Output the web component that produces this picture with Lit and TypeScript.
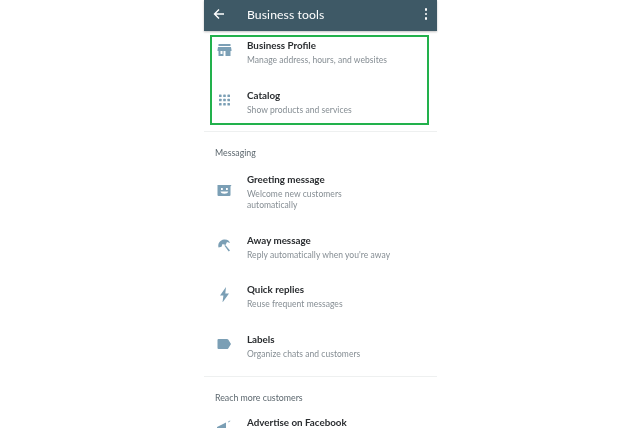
import { LitElement, css, html, svg } from "lit";
import { customElement } from "lit/decorators.js";

const icons = {
  store: svg`<path d="M1.500 1h12v2h-12zM1 4h13l.5 3v1h-1v5H8.500V8h-2v5h-5V8h-1V7zM3.500 8v3h2V8z" fill-rule="evenodd"/>`,
  grid: svg`<g transform="translate(2 1.500)"><rect width="2.600" height="2.600" rx=".6"/><rect x="4.200" width="2.600" height="2.600" rx=".6"/><rect x="8.400" width="2.600" height="2.600" rx=".6"/><rect y="4.200" width="2.600" height="2.600" rx=".6"/><rect x="4.200" y="4.200" width="2.600" height="2.600" rx=".6"/><rect x="8.400" y="4.200" width="2.600" height="2.600" rx=".6"/><rect y="8.400" width="2.600" height="2.600" rx=".6"/><rect x="4.200" y="8.400" width="2.600" height="2.600" rx=".6"/><rect x="8.400" y="8.400" width="2.600" height="2.600" rx=".6"/></g>`,
  greeting: svg`<path fill-rule="evenodd" d="M.5 2H14.500l-1 1.500V12a1 1 0 0 1-1 1H1.500a1 1 0 0 1-1-1zM4 5v2h1.800V5zm5 0v2h1.800V5zM3.500 8.500c.4 1.300 1.900 2.300 3.900 2.300s3.500-1 3.900-2.300z"/>`,
  umbrella: svg`<path d="M1.500 9.500C.5 5.500 3 2 7 1.500c3.500-.3 5.500 1.300 6 3.500L10 4 8.500 7 5.500 6 4.500 8.800zM7.300 7.500l1.300-.3 4.400 5.300-1.300 1z"/>`,
  bolt: svg`<path d="M9 0 3 8.500h3.400L5.500 15.500 12 6.500H8.300z"/>`,
  label: svg`<path d="M1.500 2h8.500a1.500 1.500 0 0 1 1.200.6L14 7l-2.800 4.400a1.500 1.500 0 0 1-1.200.6H1.500A1 1 0 0 1 .5 11V3a1 1 0 0 1 1-1z"/>`,
  megaphone: svg`<path d="M0 14 9 9.500V15H0zM11 8.800l2-1.300.4.600-2 1.300z"/>`,
};

type Tool = { icon: keyof typeof icons; title: string; sub?: string };

@customElement("app-root")
export class AppRoot extends LitElement {
  static styles = css`
    :host {
      display: flex;
      justify-content: center;
      height: 428px;
      background: #fff;
      overflow: hidden;
      font-family: Lato, "Noto Sans", sans-serif;
    }
    .phone {
      width: 233px;
      margin-right: 1px;
      filter: blur(0.35px);
    }
    .bar {
      height: 31px;
      box-sizing: border-box;
      padding: 0 10px 3px 9px;
      background: #3e5966;
      display: flex;
      align-items: center;
      color: #fff;
      box-shadow: 0 1px 2px rgba(0, 0, 0, 0.25);
    }
    .bar svg {
      fill: none;
      stroke: #fff;
    }
    .bar h1 {
      font-size: 12.200px;
      font-weight: 400;
      margin: 0 0 0 22px;
      flex: 1;
      letter-spacing: 0.1px;
    }
    .dots {
      display: flex;
      flex-direction: column;
      gap: 2px;
    }
    .dots i {
      width: 2.500px;
      height: 2.500px;
      border-radius: 50%;
      background: #fff;
    }
    .box {
      margin: 4px 8px 0 6px;
      border: 2px solid #22b14c;
      padding: 1px 0 7px;
      display: flex;
      flex-direction: column;
      gap: 22px;
    }
    .rows {
      display: flex;
      flex-direction: column;
      gap: 21.500px;
      margin-top: 14px;
    }
    .reach {
      margin-top: 12px;
    }
    .row {
      display: flex;
      align-items: center;
      padding-left: 13px;
    }
    .box .row {
      padding-left: 5px;
    }
    .row svg {
      width: 15px;
      height: 15px;
      fill: #7b9fb5;
      flex: none;
      margin: -3px 15px 0 0;
    }
    .row .t {
      font-size: 9.800px;
      line-height: 14px;
      font-weight: 700;
      color: #2a2d30;
    }
    .row .s {
      font-size: 8.500px;
      line-height: 11px;
      margin-top: 3px;
      color: #858d93;
      letter-spacing: 0.05px;
    }
    hr {
      border: 0;
      border-top: 1px solid #eef0f0;
      margin: 0;
    }
    .first {
      margin-top: 6px;
    }
    .last {
      margin-top: 16px;
    }
    .head {
      font-size: 8.800px;
      line-height: 11px;
      color: #5c676e;
      margin: 15px 0 0 11px;
    }
  `;

  private renderRow(tool: Tool) {
    return html`<div class="row">
      <svg viewBox="0 0 15 15">${icons[tool.icon]}</svg>
      <div>
        <div class="t">${tool.title}</div>
        ${tool.sub
          ? html`<div class="s">${tool.sub.split("\n").map((l, i) => i ? html`<br />${l}` : l)}</div>`
          : ""}
      </div>
    </div>`;
  }

  render() {
    const top: Tool[] = [
      { icon: "store", title: "Business Profile", sub: "Manage address, hours, and websites" },
      { icon: "grid", title: "Catalog", sub: "Show products and services" },
    ];
    const messaging: Tool[] = [
      { icon: "greeting", title: "Greeting message", sub: "Welcome new customers\nautomatically" },
      { icon: "umbrella", title: "Away message", sub: "Reply automatically when you're away" },
      { icon: "bolt", title: "Quick replies", sub: "Reuse frequent messages" },
      { icon: "label", title: "Labels", sub: "Organize chats and customers" },
    ];
    return html`<div class="phone">
      <div class="bar">
        <svg width="12" height="12" viewBox="0 0 12 12" stroke-width="1.400">
          <path d="M11 6H1.500M6 1.500 1.500 6 6 10.500" />
        </svg>
        <h1>Business tools</h1>
        <div class="dots"><i></i><i></i><i></i></div>
      </div>
      <div class="box">${top.map((t) => this.renderRow(t))}</div>
      <hr class="first" />
      <div class="head">Messaging</div>
      <div class="rows">${messaging.map((t) => this.renderRow(t))}</div>
      <hr class="last" />
      <div class="head">Reach more customers</div>
      <div class="rows reach">${this.renderRow({ icon: "megaphone", title: "Advertise on Facebook" })}</div>
    </div>`;
  }
}
